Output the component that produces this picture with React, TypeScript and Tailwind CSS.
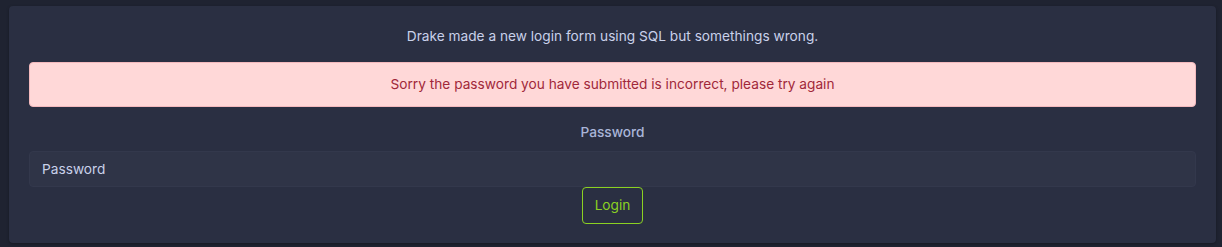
export default function App() {
  return (
    <div
      className="min-h-[247px] w-full bg-[#1f2331] pl-[9px] pr-[6px] pt-[6px] pb-[4px]"
      style={{ fontFamily: 'Inter, "Noto Sans", sans-serif' }}
    >
      <div className="rounded-[4px] bg-[#2a2f42] px-5 pt-5 pb-[19px] shadow-[0_1px_3px_rgba(0,0,0,0.3)]">
        <p className="text-center text-[13.7px] leading-[21px] text-[#c9d1ea]">
          Drake made a new login form using SQL but somethings wrong.
        </p>
        <div className="mt-[15px] rounded-[4px] border border-[#f3b9bd] bg-[#ffd8d8] py-[11px] text-center text-[13.7px] leading-[21px] text-[#a1283a]">
          Sorry the password you have submitted is incorrect, please try again
        </div>
        <form className="mt-[15px] flex flex-col items-center" onSubmit={(e) => e.preventDefault()}>
          <label className="text-[13.7px] leading-[21px] font-medium text-[#a9b5d8]">Password</label>
          <input
            type="password"
            placeholder="Password"
            className="mt-[8px] h-[36px] w-full rounded-[4px] border border-[#33384c] bg-[#2f3447] px-[12px] text-[13.7px] text-[#c9d1ea] placeholder:text-[#c9d1ea] outline-none"
          />
          <button
            type="submit"
            className="h-[37px] w-[61px] rounded-[4px] border border-[#8bd122] text-[13.7px] text-[#8bd122]"
          >
            Login
          </button>
        </form>
      </div>
    </div>
  );
}
